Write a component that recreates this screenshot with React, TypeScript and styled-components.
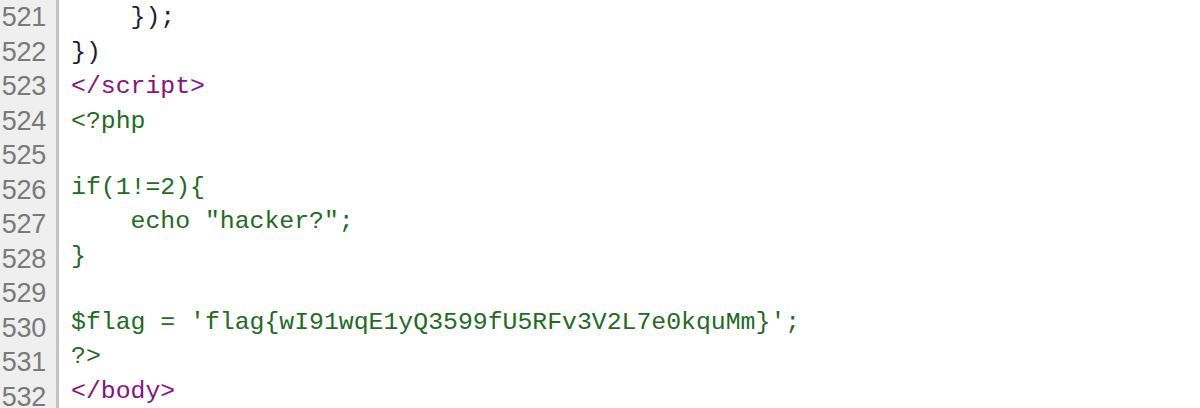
import React from "react";
import styled, { createGlobalStyle } from "styled-components";

const Global = createGlobalStyle`
  html, body { margin: 0; padding: 0; background: #fff; }
  body { width: 1200px; height: 408px; overflow: hidden; }
`;

const Viewer = styled.div`
  display: flex;
  width: 1200px;
  height: 408px;
  overflow: hidden;
  background: #ffffff;
`;

const Gutter = styled.div`
  width: 56px;
  flex: none;
  background: #efefef;
  border-right: 3px solid #c4c4c4;
  display: flex;
  flex-direction: column;
`;

const LineNo = styled.div`
  height: 34.5px;
  line-height: 34.5px;
  font-family: "Liberation Sans", Arial, sans-serif;
  font-size: 27px;
  color: #7a7a7a;
  text-align: right;
  padding-right: 10px;
  letter-spacing: -0.3px;
`;

const Code = styled.div`
  flex: 1;
  padding-left: 12px;
  display: flex;
  flex-direction: column;
`;

const Line = styled.div`
  height: 34.5px;
  line-height: 34.5px;
  font-family: "Liberation Mono", "Courier New", monospace;
  font-size: 24.8px;
  white-space: pre;
  color: #226b25;
`;

const Span = styled.span<{ $kind: "plain" | "tag" | "punct" }>`
  color: ${(p) =>
    p.$kind === "tag" ? "#881280" : p.$kind === "punct" ? "#1c1c3a" : "#226b25"};
`;

type Seg = [string, "plain" | "tag" | "punct"];

const lines: { n: number; segs: Seg[] }[] = [
  { n: 521, segs: [["    });", "punct"]] },
  { n: 522, segs: [["})", "punct"]] },
  { n: 523, segs: [["</script>", "tag"]] },
  { n: 524, segs: [["<?php", "plain"]] },
  { n: 525, segs: [] },
  { n: 526, segs: [["if(1!=2){", "plain"]] },
  { n: 527, segs: [['    echo "hacker?";', "plain"]] },
  { n: 528, segs: [["}", "plain"]] },
  { n: 529, segs: [] },
  {
    n: 530,
    segs: [["$flag = 'flag{wI91wqE1yQ3599fU5RFv3V2L7e0kquMm}';", "plain"]],
  },
  { n: 531, segs: [["?>", "plain"]] },
  { n: 532, segs: [["</body>", "tag"]] },
];

export default function App() {
  return (
    <>
      <Global />
      <Viewer>
        <Gutter>
          {lines.map((l) => (
            <LineNo key={l.n}>{l.n}</LineNo>
          ))}
        </Gutter>
        <Code>
          {lines.map((l) => (
            <Line key={l.n}>
              {l.segs.map((s, i) => (
                <Span key={i} $kind={s[1]}>
                  {s[0]}
                </Span>
              ))}
            </Line>
          ))}
        </Code>
      </Viewer>
    </>
  );
}
